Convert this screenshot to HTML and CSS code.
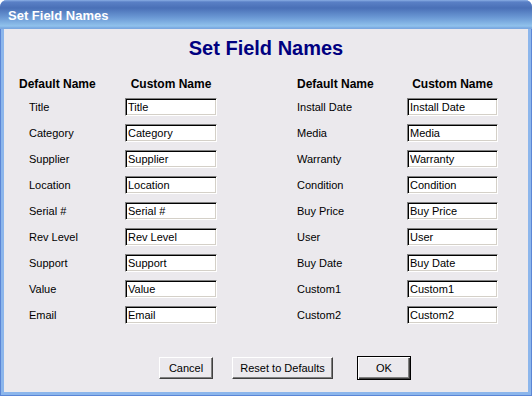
FILE: index.html
```html
<!DOCTYPE html>
<html lang="en">
<head>
    <meta charset="UTF-8">
    <title>Set Field Names</title>
    <link rel="stylesheet" href="styles.css">
</head>
<body>
    <div class="window">
        <div class="titlebar">Set Field Names</div>
        <div class="client">
            <h1 class="heading">Set Field Names</h1>
            <div class="fields">
                <div class="group group-left">
                    <div class="col-head">Default Name</div>
                    <div class="col-head custom">Custom Name</div>
                    <label>Title</label><input type="text" value="Title">
                    <label>Category</label><input type="text" value="Category">
                    <label>Supplier</label><input type="text" value="Supplier">
                    <label>Location</label><input type="text" value="Location">
                    <label>Serial #</label><input type="text" value="Serial #">
                    <label>Rev Level</label><input type="text" value="Rev Level">
                    <label>Support</label><input type="text" value="Support">
                    <label>Value</label><input type="text" value="Value">
                    <label>Email</label><input type="text" value="Email">
                </div>
                <div class="group group-right">
                    <div class="col-head">Default Name</div>
                    <div class="col-head custom">Custom Name</div>
                    <label>Install Date</label><input type="text" value="Install Date">
                    <label>Media</label><input type="text" value="Media">
                    <label>Warranty</label><input type="text" value="Warranty">
                    <label>Condition</label><input type="text" value="Condition">
                    <label>Buy Price</label><input type="text" value="Buy Price">
                    <label>User</label><input type="text" value="User">
                    <label>Buy Date</label><input type="text" value="Buy Date">
                    <label>Custom1</label><input type="text" value="Custom1">
                    <label>Custom2</label><input type="text" value="Custom2">
                </div>
            </div>
            <div class="buttons">
                <button type="button" class="btn btn-cancel">Cancel</button>
                <button type="button" class="btn btn-reset">Reset to Defaults</button>
                <button type="button" class="btn btn-ok">OK</button>
            </div>
        </div>
    </div>
</body>
</html>
```

FILE: styles.css
```css
body {
    margin: 0;
    background-color: #fff;
    font-family: "Liberation Sans", Arial, sans-serif;
}
.window {
    width: 532px;
    height: 396px;
    box-sizing: border-box;
    background-color: #8cb6ec;
    border: 1px solid #5b86d6;
    border-top: none;
    border-radius: 7px 7px 0 0;
    padding: 0 3px 3px;
    display: flex;
    flex-direction: column;
}
.titlebar {
    height: 29px;
    box-sizing: border-box;
    margin: 0 -4px;
    padding: 8px 0 0 8px;
    border-radius: 7px 7px 0 0;
    background: linear-gradient(to bottom, #8aaee4 0, #5a80c6 2px, #4a70b7 8px, #6d9bd6 18px, #90c2ec 26px, #7aa8e0 28px);
    color: #fff;
    font-size: 13px;
    font-weight: bold;
    line-height: 16px;
}
.client {
    flex: 1;
    background-color: #ebe9ed;
    padding: 7px 0 0 15px;
}
.heading {
    margin: 0 0 18px -15px;
    text-align: center;
    color: #000080;
    font-size: 20px;
    line-height: 24px;
}
.fields {
    display: flex;
    gap: 80px;
}
.group {
    display: grid;
    grid-template-columns: 106px 92px;
    grid-auto-rows: 18px;
    grid-template-rows: 12px;
    row-gap: 8px;
    align-items: center;
    font-size: 11px;
}
.group-right {
    grid-template-columns: 110px 91px;
}
.col-head {
    font-size: 12px;
    font-weight: bold;
    line-height: 12px;
}
.col-head.custom {
    text-align: center;
}
.group-left label {
    padding-left: 10px;
}
.group input {
    width: 100%;
    height: 18px;
    box-sizing: border-box;
    margin: 0;
    padding: 0 2px;
    font-family: "Liberation Sans", Arial, sans-serif;
    font-size: 11px;
    color: #000;
    background-color: #fff;
    border: 1px solid;
    border-color: #808080 #fff #fff #808080;
    box-shadow: inset 1px 1px 0 #000, inset -1px -1px 0 #d4d0c8;
    outline: none;
}
.buttons {
    display: flex;
    align-items: center;
    margin-top: 32px;
    padding-left: 140px;
}
.btn {
    height: 22px;
    padding: 0;
    font-family: "Liberation Sans", Arial, sans-serif;
    font-size: 11px;
    color: #000;
    background-color: #ebe9ed;
    border: 1px solid;
    border-color: #fff #404040 #404040 #fff;
    box-shadow: inset -1px -1px 0 #808080;
}
.btn-cancel {
    width: 54px;
}
.btn-reset {
    width: 101px;
    margin-left: 19px;
}
.btn-ok {
    width: 54px;
    height: 24px;
    margin-left: 24px;
    border-color: #000;
    box-shadow: inset 1px 1px 0 #fff, inset -1px -1px 0 #404040, inset -2px -2px 0 #808080;
}
```
